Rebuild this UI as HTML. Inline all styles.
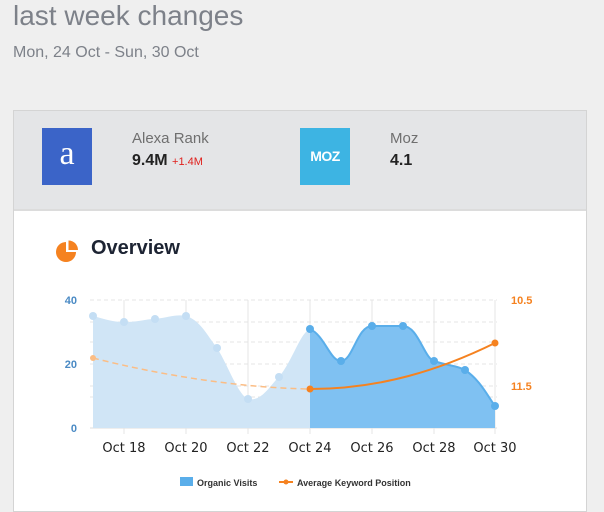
<!DOCTYPE html>
<html><head><meta charset="utf-8"><style>
body{margin:0;width:604px;height:496px;background:#efefef;font-family:"Liberation Sans",sans-serif;position:relative;overflow:hidden}
.a{position:absolute}
</style></head><body>
<div class="a" style="left:13px;top:0px;font-size:28px;color:#7d8189">last week changes</div>
<div class="a" style="left:13px;top:44px;font-size:16px;color:#7d8189">Mon, 24 Oct - Sun, 30 Oct</div>
<div class="a" style="left:13px;top:110px;width:572px;height:400px;background:#fff;border:1px solid #d4d4d4"></div>
<div class="a" style="left:14px;top:111px;width:572px;height:98px;background:#e4e5e7;border-bottom:2px solid #dcdcdc"></div>
<div class="a" style="left:42px;top:128px;width:50px;height:57px;background:#3b64c8;color:#fff;font-family:'Liberation Serif',serif;font-size:34px;text-align:center;line-height:52px">a</div>
<div class="a" style="left:132px;top:130px;font-size:15px;color:#6f6f6f">Alexa Rank</div>
<div class="a" style="left:132px;top:152px;font-size:16px;font-weight:bold;color:#222">9.4M <span style="font-size:11px;font-weight:normal;color:#e0201c">+1.4M</span></div>
<div class="a" style="left:300px;top:128px;width:50px;height:57px;background:#3db4e3;color:#fff;font-size:14px;font-weight:bold;text-align:center;line-height:57px;letter-spacing:-0.5px">MOZ</div>
<div class="a" style="left:390px;top:130px;font-size:15px;color:#6f6f6f">Moz</div>
<div class="a" style="left:390px;top:152px;font-size:16px;font-weight:bold;color:#222">4.1</div>
<svg class="a" style="left:55px;top:240px" width="24" height="24" viewBox="0 0 24 24"><path d="M11 2A10 10 0 1 0 21 12H11Z" fill="#f58220"/><path d="M13.5 0.5A9.5 9.5 0 0 1 23 10H13.5Z" fill="#f58220"/></svg>
<div class="a" style="left:91px;top:237px;font-size:20px;font-weight:bold;color:#1d2433">Overview</div>
<svg class="a" style="left:0;top:0" width="604" height="496">
<g stroke="#e4e4e4" stroke-width="1">
<line x1="90" x2="497" y1="300" y2="300" stroke-dasharray="4,3"/>
<line x1="90" x2="497" y1="322" y2="322" stroke-dasharray="4,3"/>
<line x1="90" x2="497" y1="342" y2="342" stroke-dasharray="4,3"/>
<line x1="90" x2="497" y1="364" y2="364" stroke-dasharray="4,3"/>
<line x1="90" x2="497" y1="386" y2="386" stroke-dasharray="4,3"/>
<line x1="90" x2="497" y1="397" y2="397" stroke-dasharray="4,3"/>
<line x1="90" x2="497" y1="428" y2="428" stroke="#ddd"/>
<line x1="124" x2="124" y1="300" y2="434"/><line x1="186" x2="186" y1="300" y2="434"/><line x1="248" x2="248" y1="300" y2="434"/><line x1="310" x2="310" y1="300" y2="434"/><line x1="372" x2="372" y1="300" y2="434"/><line x1="434" x2="434" y1="300" y2="434"/><line x1="495" x2="495" y1="300" y2="434"/>
</g>
<path d="M93 316C105 319 112 322 124 322C140 322 145 319 155 319C170 317 176 314 186 316C200 320 207 335 217 348C228 365 238 395 248 399C262 402 270 385 279 377C293 360 300 333 310 329V428H93Z" fill="#d0e5f6"/>
<path d="M310 329C325 336 330 361 341 361C353 361 357 326 372 326H403C418 326 424 358 434 361C448 366 456 365 465 370C480 380 487 395 495 406V428H310Z" fill="#7fc1f2"/>
<path d="M310 329C325 336 330 361 341 361C353 361 357 326 372 326H403C418 326 424 358 434 361C448 366 456 365 465 370C480 380 487 395 495 406" fill="none" stroke="#5aaeea" stroke-width="2"/>
<g fill="#c4def4"><circle cx="93" cy="316" r="4"/><circle cx="124" cy="322" r="4"/><circle cx="155" cy="319" r="4"/><circle cx="186" cy="316" r="4"/><circle cx="217" cy="348" r="4"/><circle cx="248" cy="399" r="4"/><circle cx="279" cy="377" r="4"/></g>
<g fill="#5aaeea"><circle cx="310" cy="329" r="4"/><circle cx="341" cy="361" r="4"/><circle cx="372" cy="326" r="4"/><circle cx="403" cy="326" r="4"/><circle cx="434" cy="361" r="4"/><circle cx="465" cy="370" r="4"/><circle cx="495" cy="406" r="4"/></g>
<path d="M93 358C160 375 240 388 310 389" fill="none" stroke="#fbbd85" stroke-width="1.5" stroke-dasharray="6,4"/>
<path d="M310 389C380 389 440 370 495 343" fill="none" stroke="#f58220" stroke-width="2"/>
<circle cx="93" cy="358" r="3" fill="#fbbd85"/><circle cx="310" cy="389" r="3.5" fill="#f58220"/><circle cx="495" cy="343" r="3.5" fill="#f58220"/>
<g font-size="11" font-weight="bold" fill="#4a8ac4" text-anchor="end"><text x="77" y="304">40</text><text x="77" y="368">20</text><text x="77" y="432">0</text></g>
<g font-size="11" font-weight="bold" fill="#f58220"><text x="511" y="304">10.5</text><text x="511" y="390">11.5</text></g>
<g font-size="13" fill="#222" text-anchor="middle" font-family="DejaVu Sans,sans-serif"><text x="124" y="452">Oct 18</text><text x="186" y="452">Oct 20</text><text x="248" y="452">Oct 22</text><text x="310" y="452">Oct 24</text><text x="372" y="452">Oct 26</text><text x="434" y="452">Oct 28</text><text x="495" y="452">Oct 30</text></g>
<rect x="180" y="477" width="13" height="9" fill="#5aaeea"/>
<text x="197" y="486" font-size="9" font-weight="bold" fill="#333">Organic Visits</text>
<line x1="279" x2="293" y1="482" y2="482" stroke="#f58220" stroke-width="2"/><circle cx="286" cy="482" r="2.5" fill="#f58220"/>
<text x="297" y="486" font-size="9" font-weight="bold" fill="#333">Average Keyword Position</text>
</svg>
</body></html>
